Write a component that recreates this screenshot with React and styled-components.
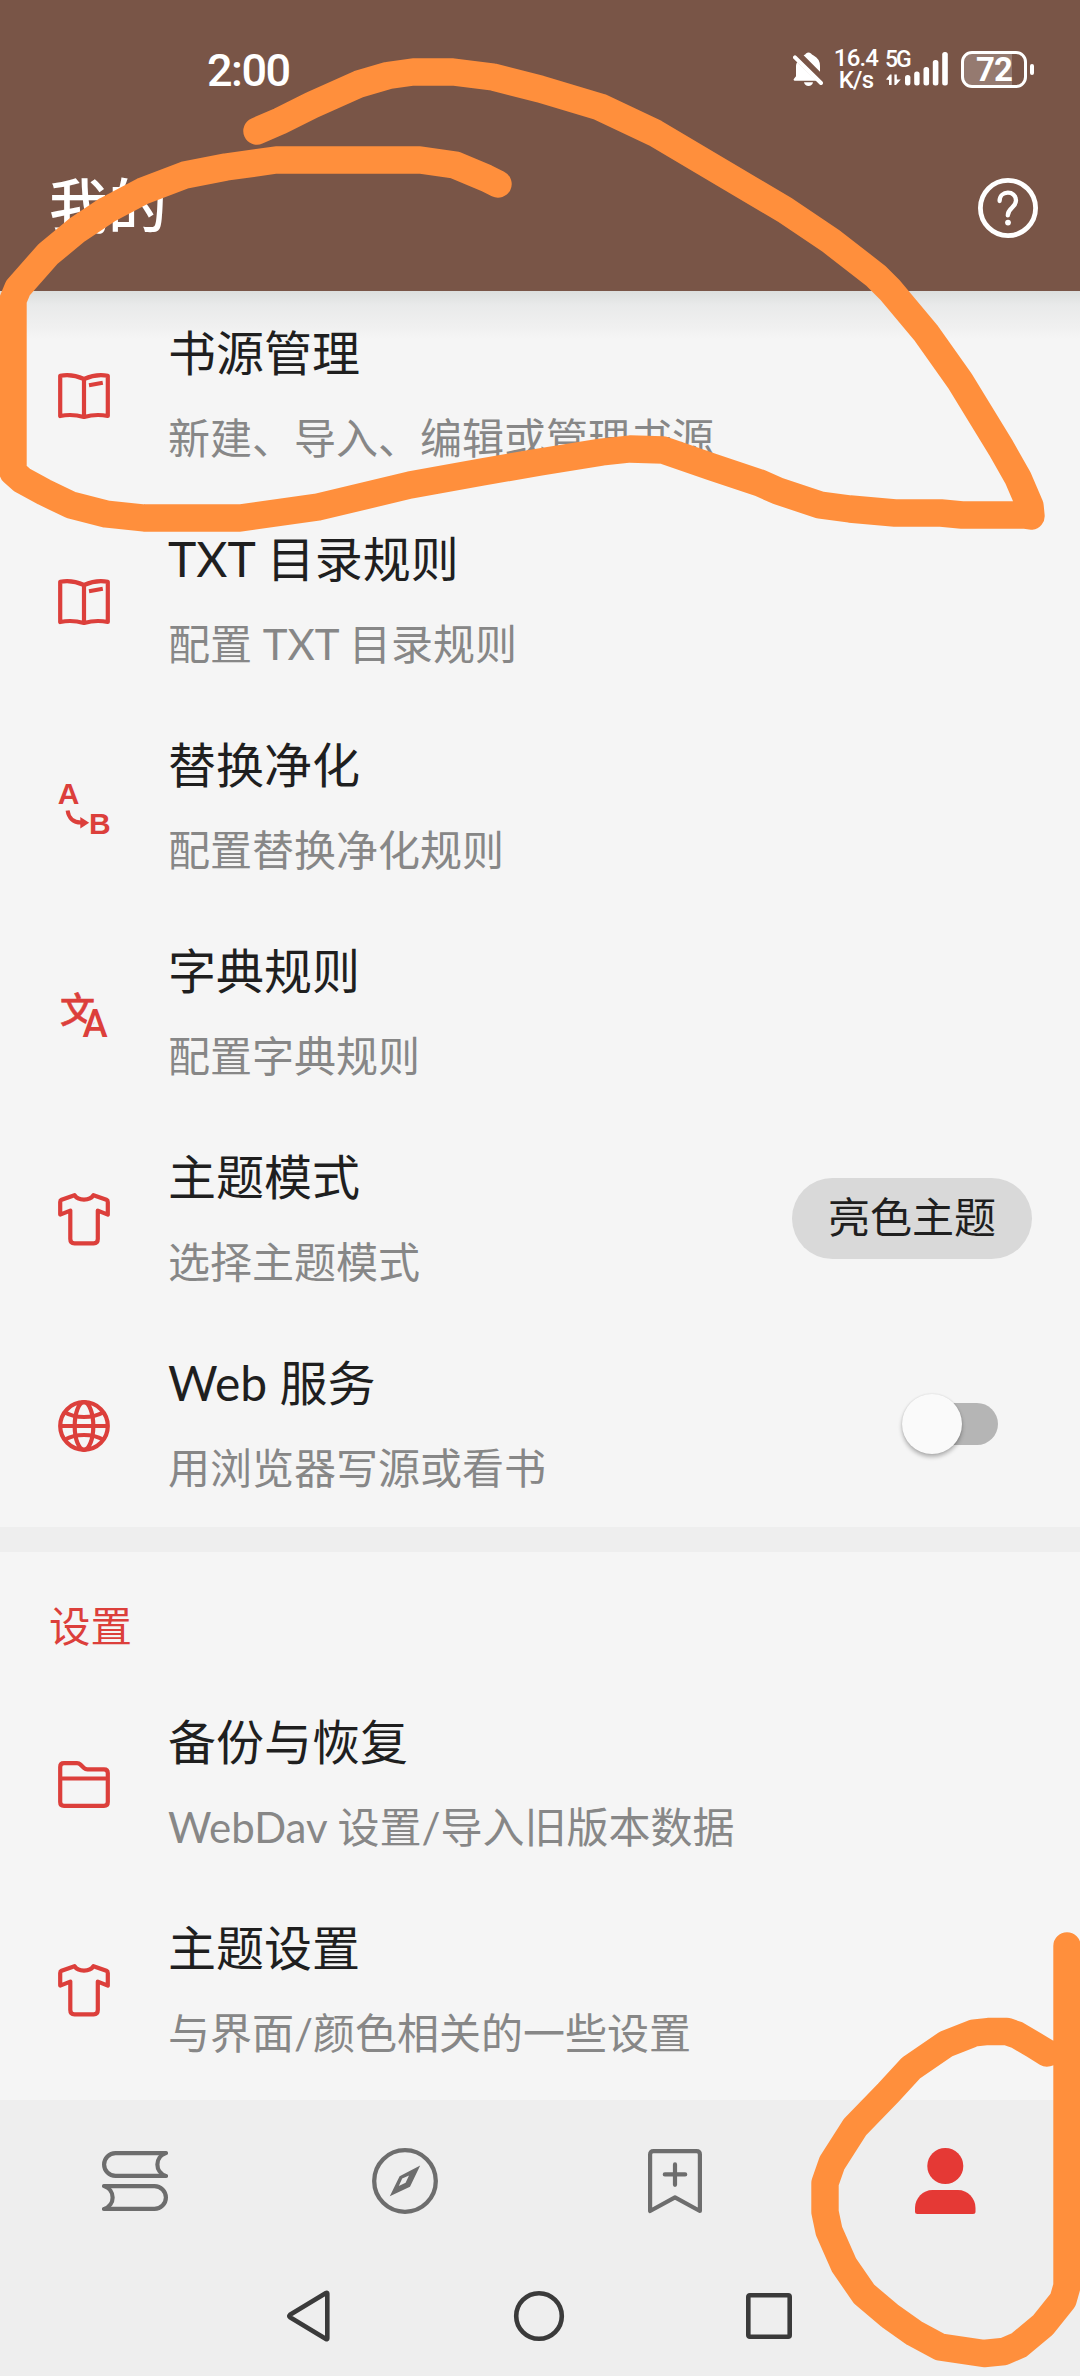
import React from "react";
import styled, { createGlobalStyle } from "styled-components";

const GlobalStyle = createGlobalStyle`
  * {
    box-sizing: border-box;
  }
  body {
    margin: 0;
    background: #f5f5f5;
    font-family: Roboto, "Noto Sans CJK SC", sans-serif;
  }
  svg {
    display: block;
    flex-shrink: 0;
  }
`;

const BookIcon = () => (
  <LineIcon width="52" height="46" viewBox="0 0 52 46">
    <path d="M2.2 2.8Q14 .6 26 6Q38 .6 49.8 2.8V43Q38 40.6 26 44Q14 40.6 2.2 43ZM26 6V44M31 12.2L44.8 9.8" />
  </LineIcon>
);

const ReplaceIcon = () => (
  <LetterIcon width="52" height="52" viewBox="0 0 52 52">
    <Letter x="-0.3" y="21.6">A</Letter>
    <Letter x="31" y="52">B</Letter>
    <path
      d="M9.6 28.6C10.5 35.5 15 40.6 23 40.6"
      fill="none"
      stroke="#dc3f3b"
      strokeWidth="4"
    />
    <path d="M22.3 35L31.2 40.8L22.3 46.6Z" />
  </LetterIcon>
);

const TranslateIcon = () => (
  <LetterIcon width="46" height="46" viewBox="0 0 46 46">
    <Hanzi x="-1" y="32">文</Hanzi>
    <Latin x="21.4" y="46">A</Latin>
  </LetterIcon>
);

const ShirtIcon = () => (
  <LineIcon width="52" height="53" viewBox="0 0 52 53">
    <path d="M16.5 2.2L3.6 6.8Q2.2 7.4 2.2 9V21.6L12.3 17.6V46Q12.3 50.3 16.5 50.3H35.7Q39.8 50.3 39.8 46V17.6L49.8 21.6V9Q49.8 7.4 48.4 6.8L35.5 2.2C32 8 20 8 16.5 2.2Z" />
  </LineIcon>
);

const GlobeIcon = () => (
  <LineIcon width="52" height="52" viewBox="0 0 52 52">
    <circle cx="26" cy="26" r="23.8" />
    <ellipse cx="26" cy="26" rx="9.3" ry="23.8" />
    <path d="M2 26H50M7 12.5Q15 17 26 17T45 12.5M7 39.5Q15 35 26 35T45 39.5" />
  </LineIcon>
);

const FolderIcon = () => (
  <LineIcon width="52" height="47" viewBox="0 0 52 47">
    <path d="M2.2 6Q2.2 2.2 6 2.2H19Q21 2.2 22.5 3.6L26 7Q27.5 8.4 29.5 8.4H46Q49.8 8.4 49.8 12V41Q49.8 44.8 46 44.8H6Q2.2 44.8 2.2 41ZM2.2 17.5H49.8" />
  </LineIcon>
);

const BellOffIcon = () => (
  <svg width="30" height="34" viewBox="0 0 30 34" fill="#fff">
    <path d="M10.6 3.2Q12.6 2.6 13 1.6Q15.5-.8 18 1.6Q18.6 2.6 20.6 3.6Q27 7 27 14V19.8Z" />
    <path d="M4.2 10L23.5 28.8H1.6Q-.2 28.2 1.2 26.4L3 24.2V14Q3 12 4.2 10Z" />
    <path d="M2 5.4L28 31" stroke="#fff" strokeWidth="4" strokeLinecap="round" />
    <path d="M11 30.2H20Q19 34 15.5 34T11 30.2Z" />
  </svg>
);

const SignalIcon = () => (
  <svg width="63" height="36" viewBox="0 0 63 36" fill="#fff">
    <path d="M0 28.5L4 23.5H5.6V34H3V29ZM8.4 23.5H10.8V28.5H14.8L10 34H8.4Z" />
    <rect x="19" y="24" width="5.4" height="10.4" rx="2.5" />
    <rect x="28.2" y="20.5" width="5.4" height="13.9" rx="2.5" />
    <rect x="37.5" y="16" width="5.6" height="18.4" rx="2.5" />
    <rect x="46.8" y="9" width="5.6" height="25.4" rx="2.5" />
    <rect x="56.2" y="1" width="5.6" height="33.4" rx="2.5" />
  </svg>
);

const HelpIcon = () => (
  <svg width="60" height="60" viewBox="0 0 60 60" fill="none" stroke="#fff">
    <circle cx="30" cy="30" r="27.6" strokeWidth="4.8" />
    <path
      d="M21.6 23C21.6 12 38 12 38 22.6C38 29.6 29.8 29.6 29.8 37.4"
      strokeWidth="4.3"
      strokeLinecap="round"
    />
    <circle cx="30" cy="44.6" r="2.9" fill="#fff" stroke="none" />
  </svg>
);

const BooksTabIcon = () => (
  <TabLineIcon width="66" height="60" viewBox="0 0 66 60">
    <path d="M64 2.1H13.5A11.4 11.4 0 0 0 13.5 24.9H64C52.5 21.5 52.5 5.5 64 2.1Z" />
    <path d="M2 35.1H52.5A11.4 11.4 0 0 1 52.5 57.9H2C13.5 54.5 13.5 38.5 2 35.1Z" />
  </TabLineIcon>
);

const CompassTabIcon = () => (
  <svg width="66" height="66" viewBox="0 0 66 66">
    <circle cx="33" cy="33" r="30.8" fill="none" stroke="#6d6d6d" strokeWidth="4.3" />
    <path
      d="M48.2 17.6L38 38.8L17.8 48.2L27.6 28.2ZM37 27.6L30.2 30.4L26.8 38L33.6 34.8Z"
      fill="#6d6d6d"
      fillRule="evenodd"
    />
  </svg>
);

const BookmarkTabIcon = () => (
  <TabLineIcon width="54" height="65" viewBox="0 0 54 65">
    <path d="M2.1 62V5.5Q2.1 2.1 5.5 2.1H48.5Q51.9 2.1 51.9 5.5V62L27 48.4Z" />
    <path d="M16.8 25.4H37.2M27 15.4V35.8" strokeLinecap="round" />
  </TabLineIcon>
);

const PersonTabIcon = () => (
  <svg width="61" height="66" viewBox="0 0 61 66" fill="#e53935">
    <circle cx="30.3" cy="18" r="18" />
    <path d="M2.5 66Q0 66 0 63.5V60C0 50 8 42 17.5 42H43C52.5 42 60.5 50 60.5 60V63.5Q60.5 66 58 66Z" />
  </svg>
);

const Item = ({ icon, title, summary, children }) => (
  <Row>
    <IconBox>{icon}</IconBox>
    <Texts>
      <Title>{title}</Title>
      <Summary>{summary}</Summary>
    </Texts>
    {children}
  </Row>
);

export default function App() {
  return (
    <Screen>
      <GlobalStyle />
      <Header>
        <StatusBar>
          <Clock>2:00</Clock>
          <StatusIcons>
            <BellOffIcon />
            <Speed>
              <span>16.4</span>
              <span>K/s</span>
            </Speed>
            <Signal>
              <Network>5G</Network>
              <SignalIcon />
            </Signal>
            <Battery>
              <BatteryBody>72</BatteryBody>
              <BatteryTip />
            </Battery>
          </StatusIcons>
        </StatusBar>
        <Toolbar>
          <PageTitle>我的</PageTitle>
          <HelpIcon />
        </Toolbar>
      </Header>

      <List>
        <Group>
          <Item icon={<BookIcon />} title="书源管理" summary="新建、导入、编辑或管理书源" />
          <Item icon={<BookIcon />} title="TXT 目录规则" summary="配置 TXT 目录规则" />
          <Item icon={<ReplaceIcon />} title="替换净化" summary="配置替换净化规则" />
          <Item icon={<TranslateIcon />} title="字典规则" summary="配置字典规则" />
          <Item icon={<ShirtIcon />} title="主题模式" summary="选择主题模式">
            <Pill>亮色主题</Pill>
          </Item>
          <Item icon={<GlobeIcon />} title="Web 服务" summary="用浏览器写源或看书">
            <Switch>
              <Thumb />
            </Switch>
          </Item>
        </Group>
        <Divider />
        <Group>
          <Category>设置</Category>
          <Item icon={<FolderIcon />} title="备份与恢复" summary="WebDav 设置/导入旧版本数据" />
          <Item icon={<ShirtIcon />} title="主题设置" summary="与界面/颜色相关的一些设置" />
        </Group>
      </List>

      <TabBar>
        <Tab><BooksTabIcon /></Tab>
        <Tab><CompassTabIcon /></Tab>
        <Tab><BookmarkTabIcon /></Tab>
        <Tab><PersonTabIcon /></Tab>
      </TabBar>
      <SystemBar>
        <SystemIcon width="44" height="52" viewBox="0 0 44 52">
          <path d="M40.3 3.6Q40.3 2.2 39 3L3 24.8Q1.8 26 3 27.2L39 49Q40.3 49.8 40.3 48.4Z" />
        </SystemIcon>
        <SystemIcon width="52" height="52" viewBox="0 0 52 52">
          <circle cx="26" cy="26" r="22.8" />
        </SystemIcon>
        <SystemIcon width="46" height="46" viewBox="0 0 46 46">
          <rect x="2.3" y="2.3" width="41.4" height="41.4" rx="1.5" />
        </SystemIcon>
      </SystemBar>

      {/* freehand marker strokes */}
      <Marker width="1080" height="2376" viewBox="0 0 1080 2376">
        <path d="M257 131L280 121L312 105L359 84L388 75.5L413 72H453L493 77L540 89L600 107L655 133L741 184L785 210L831 241L876 276L890 290L926 333L960 381L1001 448L1018 478L1030 506L1031 516L1024 515H962L941 513H895L850 509L820 505L778 491L760 483L712 467L663 450L630 449L602 452L540 462L482 472L410 485L318 507L240 518H144L106 514L71 505L44 492L22 480L13 472V300L18 288L48 254L77 230L107 210L143 191L185 175L226 167L276 160H420L455 165L486 178L498 184" />
        <path d="M1067 1946V2286L1063 2300L1043 2325L1019 2345L1004 2351.5L984 2353.5L940 2347L914 2333L890 2316L864 2294L844 2265L829 2231L825 2212V2183L832 2163L855 2127L888 2093L911 2068L946 2044L974 2033L988 2031.5H1007L1017 2035L1034 2045L1047 2053" />
      </Marker>
    </Screen>
  );
}

const Screen = styled.div`
  position: relative;
  display: flex;
  flex-direction: column;
  width: 1080px;
  height: 2376px;
  overflow: hidden;
  background: #f5f5f5;
`;

const Header = styled.header`
  flex: 0 0 291px;
  background: #795547;
  color: #fff;
`;

const StatusBar = styled.div`
  display: flex;
  justify-content: space-between;
  align-items: center;
  height: 124px;
  padding: 14px 46px 0 207px;
`;

const Clock = styled.div`
  padding-top: 3px;
  font-size: 45px;
  font-weight: 500;
  line-height: 50px;
  letter-spacing: -1.5px;
`;

const StatusIcons = styled.div`
  display: flex;
  align-items: center;
`;

const Speed = styled.div`
  display: flex;
  flex-direction: column;
  align-items: center;
  width: 44px;
  margin-left: 11px;
  font-size: 24px;
  font-weight: 500;
  line-height: 22px;
  letter-spacing: -0.8px;
`;

const Signal = styled.div`
  position: relative;
  margin-left: 8px;
`;

const Network = styled.span`
  position: absolute;
  top: -2px;
  left: -1px;
  font-size: 23px;
  font-weight: 500;
  line-height: 22px;
  letter-spacing: -2px;
`;

const Battery = styled.div`
  display: flex;
  align-items: center;
  gap: 3px;
  margin-left: 12px;
`;

const BatteryBody = styled.div`
  width: 66px;
  height: 37px;
  border: 3px solid #fff;
  border-radius: 11px;
  background: linear-gradient(to right, #957a70 48px, transparent 48px);
  font-size: 33px;
  font-weight: 700;
  line-height: 32px;
  text-align: center;
  letter-spacing: -1px;
`;

const BatteryTip = styled.div`
  width: 4px;
  height: 11px;
  border-radius: 2px;
  background: #fff;
`;

const Toolbar = styled.div`
  display: flex;
  justify-content: space-between;
  align-items: center;
  height: 167px;
  padding: 0 42px 0 49px;
`;

const PageTitle = styled.h1`
  margin: 0;
  font-size: 59px;
  font-weight: 500;
  line-height: 80px;
`;

/* shade at the top is cast by the header */
const List = styled.main`
  flex: 1;
  overflow: hidden;
  background: linear-gradient(#dcdedd, #e9eaea 14px, #f0f0f0 36px, #f5f5f5 48px);
  font-family: Lato, "Noto Sans CJK SC", sans-serif;
`;

const Group = styled.section`
  display: flex;
  flex-direction: column;
`;

const Row = styled.div`
  display: flex;
  align-items: center;
  height: 206px;
  padding: 0 48px 0 58px;
`;

const IconBox = styled.div`
  display: flex;
  align-items: center;
  justify-content: center;
  width: 52px;
  padding-top: 3px;
`;

const Texts = styled.div`
  flex: 1;
  margin-left: 58px;
  padding-top: 2px;
  white-space: nowrap;
`;

const Title = styled.div`
  margin-bottom: 23px;
  color: #1f1f1f;
  font-size: 48px;
  line-height: 62px;
`;

const Summary = styled.div`
  color: #878787;
  font-size: 42px;
  line-height: 62px;
`;

const Pill = styled.div`
  width: 240px;
  height: 81px;
  border-radius: 41px;
  background: #d9d9d9;
  color: #1f1f1f;
  font-size: 42px;
  line-height: 78px;
  text-align: center;
`;

const Switch = styled.div`
  display: flex;
  align-items: center;
  width: 90px;
  height: 42px;
  margin-right: 34px;
  border-radius: 21px;
  background: #b5b5b5;
`;

const Thumb = styled.div`
  flex-shrink: 0;
  width: 60px;
  height: 60px;
  margin-left: -6px;
  border-radius: 50%;
  background: #fafafa;
  box-shadow: 0 3px 4px rgba(0, 0, 0, 0.28), 0 0 2px rgba(0, 0, 0, 0.12);
`;

const Divider = styled.div`
  height: 25px;
  background: #eeeeee;
`;

const Category = styled.div`
  height: 128px;
  padding: 43px 0 0 49px;
  color: #dc3f3b;
  font-size: 41.5px;
  line-height: 62px;
`;

const TabBar = styled.nav`
  display: grid;
  grid-template-columns: repeat(4, 1fr);
  flex: 0 0 162px;
  background: #eeeeee;
`;

const Tab = styled.div`
  display: flex;
  align-items: center;
  justify-content: center;
`;

const SystemBar = styled.div`
  display: flex;
  align-items: center;
  justify-content: space-between;
  flex: 0 0 114px;
  padding: 0 288px 6px 287px;
  background: #eeeeee;
`;

const LineIcon = styled.svg`
  fill: none;
  stroke: #dc3f3b;
  stroke-width: 4.2;
  stroke-linejoin: round;
`;

const TabLineIcon = styled(LineIcon)`
  stroke: #6d6d6d;
`;

const SystemIcon = styled(LineIcon)`
  stroke: #3a3a3a;
  stroke-width: 4.6;
`;

const LetterIcon = styled.svg`
  overflow: visible;
  fill: #dc3f3b;
`;

const Letter = styled.text`
  font-family: "Liberation Sans", sans-serif;
  font-size: 30px;
  font-weight: 700;
`;

const Hanzi = styled.text`
  font-family: "Noto Sans CJK SC", sans-serif;
  font-size: 35px;
  font-weight: 500;
  stroke: #dc3f3b;
  stroke-width: 0.6;
`;

/* outlined in the page colour so it stays clear of the character behind it */
const Latin = styled.text`
  font-family: Roboto, sans-serif;
  font-size: 38px;
  font-weight: 500;
  stroke: #f5f5f5;
  stroke-width: 3;
  paint-order: stroke;
`;

const Marker = styled.svg`
  position: absolute;
  top: 0;
  left: 0;
  fill: none;
  stroke: #ff8f3c;
  stroke-width: 27.4;
  stroke-linecap: round;
  stroke-linejoin: round;
  pointer-events: none;
`;
